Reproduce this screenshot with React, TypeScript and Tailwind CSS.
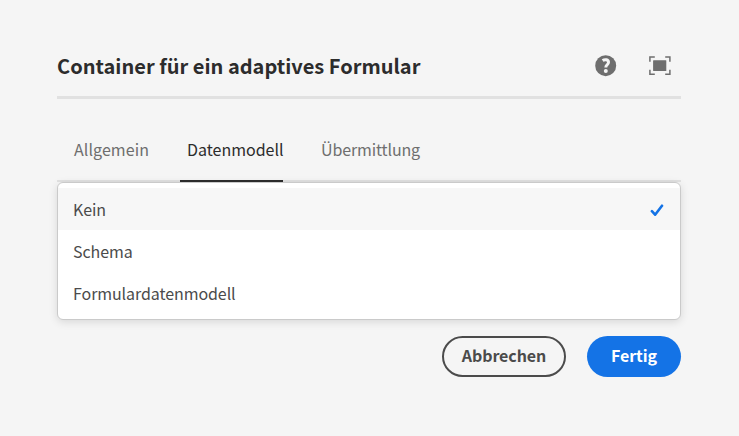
import React from "react";

const sans = "font-['Noto_Sans_CJK_JP','Open_Sans',sans-serif]";

function HelpIcon() {
  return (
    <svg width="22" height="22" viewBox="0 0 22 22" aria-hidden="true">
      <circle cx="10.7" cy="10.7" r="10.5" fill="#6e6e6e" />
      <path d="M7.6 5.5C10 4 13.5 4.5 13.5 7.3c0 2.5-2.7 2.5-2.7 5.2" fill="none" stroke="#f5f5f5" strokeWidth="3" />
      <circle cx="10.8" cy="16.1" r="2" fill="#f5f5f5" />
    </svg>
  );
}

function FullScreenIcon() {
  return (
    <svg width="22" height="20" viewBox="0 0 22 20" aria-hidden="true">
      <rect x="4.1" y="4.3" width="13.2" height="10.6" rx="0.5" fill="#6e6e6e" />
      <path
        d="M.9 5.8V1H5.8M16.2 1h4.7V5.8M20.9 13.8v4.4H16.2M5.8 18.2H.9V13.8"
        fill="none"
        stroke="#6e6e6e"
        strokeWidth="1.5"
      />
    </svg>
  );
}

function CheckIcon() {
  return (
    <svg className="mt-[3px]" width="14" height="13" viewBox="0 0 14 13" aria-hidden="true">
      <path d="M1.9 7.2l3.2 3.5L12 1.7" fill="none" stroke="#1473e6" strokeWidth="2.6" strokeLinecap="round" strokeLinejoin="round" />
    </svg>
  );
}

export default function App() {
  return (
    <main className={`h-[436px] w-[739px] overflow-hidden bg-[#f5f5f5] pr-[58px] pl-[57px] pt-[36px] ${sans}`}>
      <header className="flex h-[63px] items-center justify-between border-b-[3px] border-[#e1e1e1] pr-[10px]">
        <h1 className="text-[20px] leading-[28px] font-bold tracking-[0.02px] whitespace-nowrap text-[#2c2c2c]">
          Container für ein adaptives Formular
        </h1>
        <div className="flex items-center gap-[32px]">
          <HelpIcon />
          <FullScreenIcon />
        </div>
      </header>

      <nav className="mt-[21px] flex h-[62px] border-b-2 border-[#e1e1e1] text-[16px] leading-[58px] whitespace-nowrap text-[#6e6e6e]">
        <span className="ml-[17px] w-[106px] tracking-[0.08px]">Allgemein</span>
        <span className="h-[62px] w-[103px] border-b-2 border-[#2c2c2c] pl-[7px] text-[#2c2c2c]">Datenmodell</span>
        <span className="ml-[38px] tracking-[-0.12px]">Übermittlung</span>
      </nav>

      <ul className="h-[138px] overflow-hidden rounded-[6px] border border-[#cacaca] bg-white pt-[5px] text-[16px] leading-[42px] tracking-[-0.08px] text-[#4b4b4b] shadow-[0_2px_8px_rgba(0,0,0,0.12)]">
        <li className="flex h-[42px] items-center justify-between bg-[#f7f7f7] pr-[16px] pl-[15px]">
          <span>Kein</span>
          <CheckIcon />
        </li>
        <li className="h-[42px] pl-[15px]">Schema</li>
        <li className="h-[42px] pl-[15px]">Formulardatenmodell</li>
      </ul>

      <footer className="mt-[16px] flex justify-end gap-[21px] text-[16px] font-bold tracking-[-0.1px]">
        <button className="h-[41px] w-[124px] rounded-full border-2 border-[#4b4b4b] pb-[2px] leading-[35px] text-[#4b4b4b]">Abbrechen</button>
        <button className="h-[41px] w-[94px] rounded-full bg-[#1473e6] pb-[2px] leading-[39px] text-white">Fertig</button>
      </footer>
    </main>
  );
}
